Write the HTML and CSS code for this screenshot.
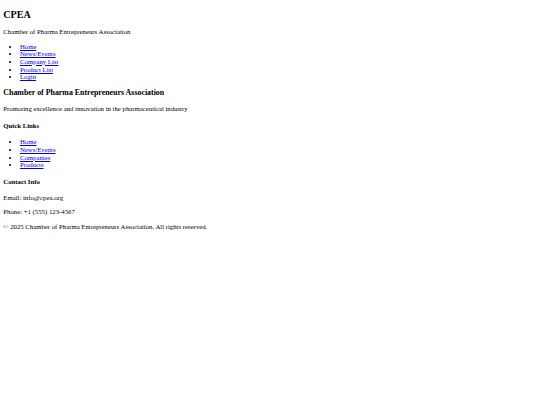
FILE: index.html
```html
<!DOCTYPE html>
<html lang="en">
<head>
<meta charset="utf-8">
<title>CPEA</title>
<link rel="stylesheet" href="styles.css">
</head>
<body>
<header class="site-header">
  <h2 class="logo">CPEA</h2>
  <p class="tagline">Chamber of Pharma Entrepreneurs Association</p>
  <nav class="main-nav">
    <ul class="nav-list">
      <li><a href="#">Home</a></li>
      <li><a href="#">News/Events</a></li>
      <li><a href="#">Company List</a></li>
      <li><a href="#">Product List</a></li>
      <li><a href="#">Login</a></li>
    </ul>
  </nav>
</header>
<footer class="site-footer">
  <h3 class="footer-title">Chamber of Pharma Entrepreneurs Association</h3>
  <p class="footer-text">Promoting excellence and innovation in the pharmaceutical industry</p>
  <h4 class="footer-heading">Quick Links</h4>
  <ul class="nav-list">
    <li><a href="#">Home</a></li>
    <li><a href="#">News/Events</a></li>
    <li><a href="#">Companies</a></li>
    <li><a href="#">Products</a></li>
  </ul>
  <h4 class="footer-heading">Contact Info</h4>
  <p class="footer-text">Email: info@cpea.org</p>
  <p class="footer-text">Phone: +1 (555) 123-4567</p>
  <p class="footer-text">&copy; 2025 Chamber of Pharma Entrepreneurs Association. All rights reserved.</p>
</footer>
</body>
</html>
```
FILE: styles.css
```css
html {
  background: #ffffff;
}
body {
  margin: 3.32px;
  font-family: "Liberation Serif", "Times New Roman", serif;
  font-size: 6.75px;
  line-height: 7.64px;
  color: #000000;
}
.logo {
  font-size: 10.1px;
  line-height: 11.46px;
  font-weight: bold;
  margin: 5.3px 0 8.27px;
}
.tagline,
.footer-text {
  margin: 6.65px 0;
}
.nav-list {
  margin: 6.65px 0;
  padding-left: 16.6px;
  list-style: disc;
}
.nav-list a {
  color: #0000ee;
  text-decoration: underline;
}
.footer-title {
  font-size: 7.9px;
  line-height: 8.94px;
  font-weight: bold;
  margin: 7.78px 0;
}
.footer-heading {
  font-size: 6.75px;
  line-height: 7.64px;
  font-weight: bold;
  margin: 8.84px 0;
}
```
